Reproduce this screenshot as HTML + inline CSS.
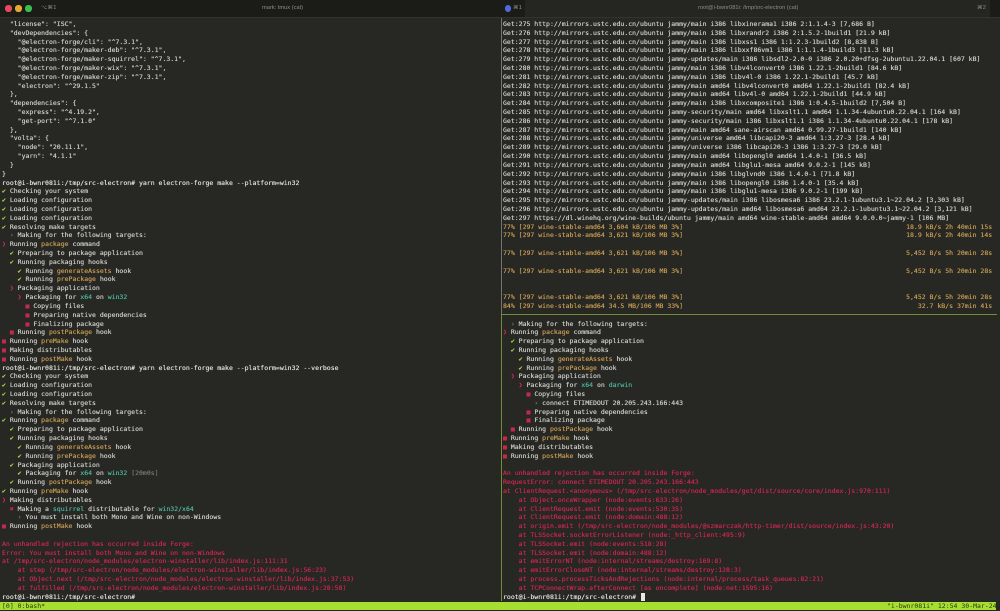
<!DOCTYPE html>
<html><head><meta charset="utf-8"><style>
html,body{margin:0;padding:0;width:1000px;height:611px;overflow:hidden;background:#272723}
#bar{position:absolute;left:0;top:0;width:1000px;height:17px;background:#1b1b18;border-bottom:1px solid #33332e}
#tab{position:absolute;left:525px;top:0;width:465px;height:17px;background:#252521}
.t{position:absolute;top:5px;font:5.7px/7px "Liberation Sans",sans-serif;color:#8d8d88;white-space:pre;filter:blur(.25px)}
.dot{position:absolute;top:5.3px;width:6.4px;height:6.4px;border-radius:50%}
pre{position:absolute;margin:0;top:19.9px;font:6.5px/8.82px "DejaVu Sans Mono","Liberation Mono",monospace;color:#cdcdc6;filter:blur(.3px);white-space:pre;text-shadow:0 0 .5px currentColor}
#l{left:2px}#r{left:503px}
.o{color:#c39a55}.r{color:#c4294f}.g{color:#9fce45}.c{color:#4fb39d}.y{color:#c39a55}.d{color:#77776f}
.p{color:#e0e0d8}
#v1{position:absolute;left:500.5px;top:18px;width:1.5px;height:297px;background:#74746c}
#v2{position:absolute;left:500.5px;top:315px;width:1.5px;height:286px;background:#6f8f30}
#h{position:absolute;left:501px;top:314.3px;width:496px;height:1.2px;background:#6f8f30}
#st{position:absolute;left:0;top:601.5px;width:996px;height:8.5px;background:#a6df32}
#st2{position:absolute;left:996px;top:601.5px;width:4px;height:8.5px;background:#272723}
#sl,#sr{position:absolute;top:601.5px;font:6.5px/8.5px "DejaVu Sans Mono",monospace;color:#2a3a10;white-space:pre;filter:blur(.25px)}
#sl{left:2px}#sr{left:887px}
#cur{position:absolute;left:641px;top:593px;width:3.5px;height:8px;background:#e8e8e0}
</style></head><body>
<div id="bar"></div><div id="tab"></div>
<div class="dot" style="left:5.3px;background:#e8485a"></div>
<div class="dot" style="left:15.3px;background:#e6a92d"></div>
<div class="dot" style="left:25.3px;background:#37c04f"></div>
<div class="t" style="left:41px">⌥⌘1</div>
<div class="t" style="left:262px">mark: tmux (cat)</div>
<div class="dot" style="left:505px;background:#5068d8"></div>
<div class="t" style="left:513px">⌘1</div>
<div class="t" style="left:698px">root@i-bwnr081i: /tmp/src-electron (cat)</div>
<div class="t" style="left:977px">⌘2</div>
<pre id="l">  "license": "ISC",
  "devDependencies": {
    "@electron-forge/cli": "^7.3.1",
    "@electron-forge/maker-deb": "^7.3.1",
    "@electron-forge/maker-squirrel": "^7.3.1",
    "@electron-forge/maker-wix": "^7.3.1",
    "@electron-forge/maker-zip": "^7.3.1",
    "electron": "^29.1.5"
  },
  "dependencies": {
    "express": "^4.19.2",
    "get-port": "^7.1.0"
  },
  "volta": {
    "node": "20.11.1",
    "yarn": "4.1.1"
  }
}
<span class="p">root@i-bwnr081i:/tmp/src-electron# yarn electron-forge make --platform=win32</span>
<span class="g">✔</span> Checking your system
<span class="g">✔</span> Loading configuration
<span class="g">✔</span> Loading configuration
<span class="g">✔</span> Loading configuration
<span class="g">✔</span> Resolving make targets
  <span class="d">›</span> Making for the following targets:
<span class="r">❯</span> Running <span class="o">package</span> command
  <span class="g">✔</span> Preparing to package application
  <span class="g">✔</span> Running packaging hooks
    <span class="g">✔</span> Running <span class="o">generateAssets</span> hook
    <span class="g">✔</span> Running <span class="o">prePackage</span> hook
  <span class="r">❯</span> Packaging application
    <span class="r">❯</span> Packaging for <span class="c">x64</span> on <span class="c">win32</span>
      <span class="r">■</span> Copying files
      <span class="r">■</span> Preparing native dependencies
      <span class="r">■</span> Finalizing package
  <span class="r">■</span> Running <span class="o">postPackage</span> hook
<span class="r">■</span> Running <span class="o">preMake</span> hook
<span class="r">■</span> Making distributables
<span class="r">■</span> Running <span class="o">postMake</span> hook
<span class="p">root@i-bwnr081i:/tmp/src-electron# yarn electron-forge make --platform=win32 --verbose</span>
<span class="g">✔</span> Checking your system
<span class="g">✔</span> Loading configuration
<span class="g">✔</span> Loading configuration
<span class="g">✔</span> Resolving make targets
  <span class="d">›</span> Making for the following targets:
<span class="g">✔</span> Running <span class="o">package</span> command
  <span class="g">✔</span> Preparing to package application
  <span class="g">✔</span> Running packaging hooks
    <span class="g">✔</span> Running <span class="o">generateAssets</span> hook
    <span class="g">✔</span> Running <span class="o">prePackage</span> hook
  <span class="g">✔</span> Packaging application
    <span class="g">✔</span> Packaging for <span class="c">x64</span> on <span class="c">win32</span> <span class="d">[20m0s]</span>
  <span class="g">✔</span> Running <span class="o">postPackage</span> hook
<span class="g">✔</span> Running <span class="o">preMake</span> hook
<span class="r">❯</span> Making distributables
  <span class="r">✖</span> Making a <span class="c">squirrel</span> distributable for <span class="c">win32/x64</span>
    <span class="d">›</span> You must install both Mono and Wine on non-Windows
<span class="r">■</span> Running <span class="o">postMake</span> hook

<span class="r">An unhandled rejection has occurred inside Forge:
Error: You must install both Mono and Wine on non-Windows
at /tmp/src-electron/node_modules/electron-winstaller/lib/index.js:111:31
    at step (/tmp/src-electron/node_modules/electron-winstaller/lib/index.js:56:23)
    at Object.next (/tmp/src-electron/node_modules/electron-winstaller/lib/index.js:37:53)
    at fulfilled (/tmp/src-electron/node_modules/electron-winstaller/lib/index.js:28:58)</span>
<span class="p">root@i-bwnr081i:/tmp/src-electron#</span></pre>
<pre id="r">Get:275 http://mirrors.ustc.edu.cn/ubuntu jammy/main i386 libxinerama1 i386 2:1.1.4-3 [7,686 B]
Get:276 http://mirrors.ustc.edu.cn/ubuntu jammy/main i386 libxrandr2 i386 2:1.5.2-1build1 [21.9 kB]
Get:277 http://mirrors.ustc.edu.cn/ubuntu jammy/main i386 libxss1 i386 1:1.2.3-1build2 [8,838 B]
Get:278 http://mirrors.ustc.edu.cn/ubuntu jammy/main i386 libxxf86vm1 i386 1:1.1.4-1build3 [11.3 kB]
Get:279 http://mirrors.ustc.edu.cn/ubuntu jammy-updates/main i386 libsdl2-2.0-0 i386 2.0.20+dfsg-2ubuntu1.22.04.1 [607 kB]
Get:280 http://mirrors.ustc.edu.cn/ubuntu jammy/main i386 libv4lconvert0 i386 1.22.1-2build1 [84.6 kB]
Get:281 http://mirrors.ustc.edu.cn/ubuntu jammy/main i386 libv4l-0 i386 1.22.1-2build1 [45.7 kB]
Get:282 http://mirrors.ustc.edu.cn/ubuntu jammy/main amd64 libv4lconvert0 amd64 1.22.1-2build1 [82.4 kB]
Get:283 http://mirrors.ustc.edu.cn/ubuntu jammy/main amd64 libv4l-0 amd64 1.22.1-2build1 [44.9 kB]
Get:284 http://mirrors.ustc.edu.cn/ubuntu jammy/main i386 libxcomposite1 i386 1:0.4.5-1build2 [7,504 B]
Get:285 http://mirrors.ustc.edu.cn/ubuntu jammy-security/main amd64 libxslt1.1 amd64 1.1.34-4ubuntu0.22.04.1 [164 kB]
Get:286 http://mirrors.ustc.edu.cn/ubuntu jammy-security/main i386 libxslt1.1 i386 1.1.34-4ubuntu0.22.04.1 [178 kB]
Get:287 http://mirrors.ustc.edu.cn/ubuntu jammy/main amd64 sane-airscan amd64 0.99.27-1build1 [140 kB]
Get:288 http://mirrors.ustc.edu.cn/ubuntu jammy/universe amd64 libcapi20-3 amd64 1:3.27-3 [28.4 kB]
Get:289 http://mirrors.ustc.edu.cn/ubuntu jammy/universe i386 libcapi20-3 i386 1:3.27-3 [29.0 kB]
Get:290 http://mirrors.ustc.edu.cn/ubuntu jammy/main amd64 libopengl0 amd64 1.4.0-1 [36.5 kB]
Get:291 http://mirrors.ustc.edu.cn/ubuntu jammy/main amd64 libglu1-mesa amd64 9.0.2-1 [145 kB]
Get:292 http://mirrors.ustc.edu.cn/ubuntu jammy/main i386 libglvnd0 i386 1.4.0-1 [71.8 kB]
Get:293 http://mirrors.ustc.edu.cn/ubuntu jammy/main i386 libopengl0 i386 1.4.0-1 [35.4 kB]
Get:294 http://mirrors.ustc.edu.cn/ubuntu jammy/main i386 libglu1-mesa i386 9.0.2-1 [199 kB]
Get:295 http://mirrors.ustc.edu.cn/ubuntu jammy-updates/main i386 libosmesa6 i386 23.2.1-1ubuntu3.1~22.04.2 [3,303 kB]
Get:296 http://mirrors.ustc.edu.cn/ubuntu jammy-updates/main amd64 libosmesa6 amd64 23.2.1-1ubuntu3.1~22.04.2 [3,121 kB]
Get:297 https://dl.winehq.org/wine-builds/ubuntu jammy/main amd64 wine-stable-amd64 amd64 9.0.0.0~jammy-1 [106 MB]
<span class="y">77% [297 wine-stable-amd64 3,604 kB/106 MB 3%]                                                         18.9 kB/s 2h 40min 15s
77% [297 wine-stable-amd64 3,621 kB/106 MB 3%]                                                         18.9 kB/s 2h 40min 14s

77% [297 wine-stable-amd64 3,621 kB/106 MB 3%]                                                         5,452 B/s 5h 20min 28s

77% [297 wine-stable-amd64 3,621 kB/106 MB 3%]                                                         5,452 B/s 5h 20min 28s


77% [297 wine-stable-amd64 3,621 kB/106 MB 3%]                                                         5,452 B/s 5h 20min 28s
84% [297 wine-stable-amd64 34.5 MB/106 MB 33%]                                                            32.7 kB/s 37min 41s</span>

  <span class="d">›</span> Making for the following targets:
<span class="r">❯</span> Running <span class="o">package</span> command
  <span class="g">✔</span> Preparing to package application
  <span class="g">✔</span> Running packaging hooks
    <span class="g">✔</span> Running <span class="o">generateAssets</span> hook
    <span class="g">✔</span> Running <span class="o">prePackage</span> hook
  <span class="r">❯</span> Packaging application
    <span class="r">❯</span> Packaging for <span class="c">x64</span> on <span class="c">darwin</span>
      <span class="r">■</span> Copying files
        <span class="d">›</span> connect ETIMEDOUT 20.205.243.166:443
      <span class="r">■</span> Preparing native dependencies
      <span class="r">■</span> Finalizing package
  <span class="r">■</span> Running <span class="o">postPackage</span> hook
<span class="r">■</span> Running <span class="o">preMake</span> hook
<span class="r">■</span> Making distributables
<span class="r">■</span> Running <span class="o">postMake</span> hook

<span class="r">An unhandled rejection has occurred inside Forge:
RequestError: connect ETIMEDOUT 20.205.243.166:443
at ClientRequest.&lt;anonymous&gt; (/tmp/src-electron/node_modules/got/dist/source/core/index.js:970:111)
    at Object.onceWrapper (node:events:633:26)
    at ClientRequest.emit (node:events:530:35)
    at ClientRequest.emit (node:domain:488:12)
    at origin.emit (/tmp/src-electron/node_modules/@szmarczak/http-timer/dist/source/index.js:43:20)
    at TLSSocket.socketErrorListener (node:_http_client:495:9)
    at TLSSocket.emit (node:events:518:28)
    at TLSSocket.emit (node:domain:488:12)
    at emitErrorNT (node:internal/streams/destroy:169:8)
    at emitErrorCloseNT (node:internal/streams/destroy:128:3)
    at process.processTicksAndRejections (node:internal/process/task_queues:82:21)
    at TCPConnectWrap.afterConnect [as oncomplete] (node:net:1595:16)</span>
<span class="p">root@i-bwnr081i:/tmp/src-electron#</span></pre>
<div id="cur"></div>
<div id="v1"></div><div id="v2"></div><div id="h"></div>
<div id="st"></div><div id="st2"></div>
<div id="sl">[0] 0:bash*</div>
<div id="sr">"i-bwnr081i" 12:54 30-Mar-24</div>
</body></html>
